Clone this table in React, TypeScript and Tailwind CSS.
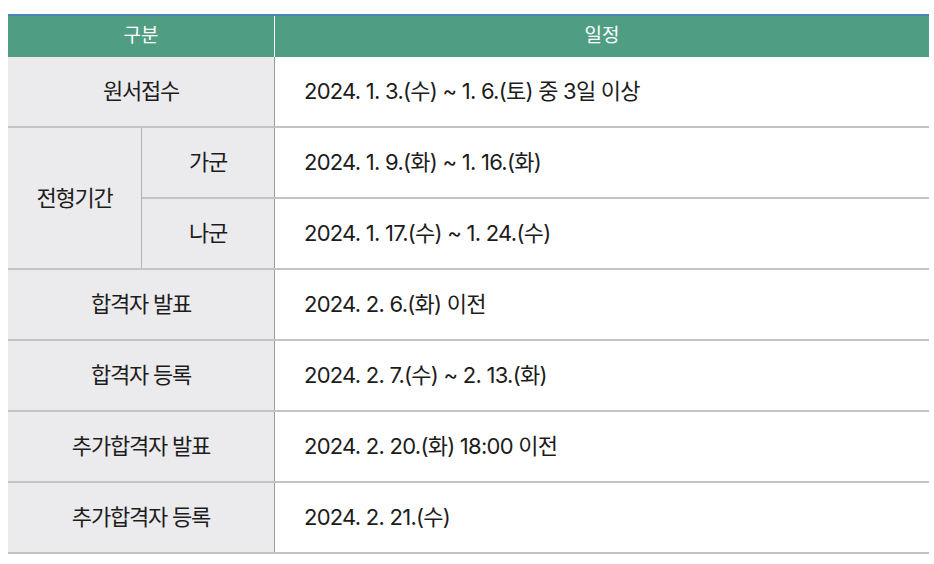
import React from "react";

const font = { fontFamily: '"Inter", "Noto Sans CJK KR", sans-serif' };

function Row({ label, value }: { label: string; value: string }) {
  return (
    <div className="flex h-[71px] border-b-2 border-[#c3c3c3]">
      <div className="w-[267px] shrink-0 bg-[#ebebee] border-r border-[#9a9a9a] flex items-center justify-center text-[22px] text-[#1c1c1c] tracking-[-1.2px]">
        {label}
      </div>
      <div className="flex-1 flex items-center pl-[29px] text-[22px] text-[#1c1c1c] tracking-[-0.75px]">
        {value}
      </div>
    </div>
  );
}

export default function App() {
  return (
    <div className="w-[934px] h-[564px] bg-white pt-[14px] pl-[8px]" style={font}>
      <div className="w-[921px]">
        <div className="flex h-[43px] border-t-2 border-[#4a84b4] bg-[#4f9e83] text-white text-[19px]">
          <div className="w-[267px] shrink-0 border-r border-white flex items-center justify-center">구분</div>
          <div className="flex-1 flex items-center justify-center">일정</div>
        </div>
        <Row label="원서접수" value="2024. 1. 3.(수) ~ 1. 6.(토) 중 3일 이상" />
        <div className="flex h-[142px] border-b-2 border-[#c3c3c3]">
          <div className="w-[134px] shrink-0 bg-[#ebebee] border-r border-[#b3b3b3] flex items-center justify-center text-[22px] text-[#1c1c1c] tracking-[-1.2px]">
            전형기간
          </div>
          <div className="flex-1 flex flex-col">
            <div className="flex h-[71px] border-b-2 border-[#c3c3c3]">
              <div className="w-[133px] shrink-0 bg-[#ebebee] border-r border-[#9a9a9a] flex items-center justify-center text-[22px] text-[#1c1c1c] tracking-[-1.2px]">
                가군
              </div>
              <div className="flex-1 flex items-center pl-[29px] text-[22px] text-[#1c1c1c] tracking-[-0.75px]">
                2024. 1. 9.(화) ~ 1. 16.(화)
              </div>
            </div>
            <div className="flex flex-1">
              <div className="w-[133px] shrink-0 bg-[#ebebee] border-r border-[#9a9a9a] flex items-center justify-center text-[22px] text-[#1c1c1c] tracking-[-1.2px]">
                나군
              </div>
              <div className="flex-1 flex items-center pl-[29px] text-[22px] text-[#1c1c1c] tracking-[-0.75px]">
                2024. 1. 17.(수) ~ 1. 24.(수)
              </div>
            </div>
          </div>
        </div>
        <Row label="합격자 발표" value="2024. 2. 6.(화) 이전" />
        <Row label="합격자 등록" value="2024. 2. 7.(수) ~ 2. 13.(화)" />
        <Row label="추가합격자 발표" value="2024. 2. 20.(화) 18:00 이전" />
        <Row label="추가합격자 등록" value="2024. 2. 21.(수)" />
      </div>
    </div>
  );
}
